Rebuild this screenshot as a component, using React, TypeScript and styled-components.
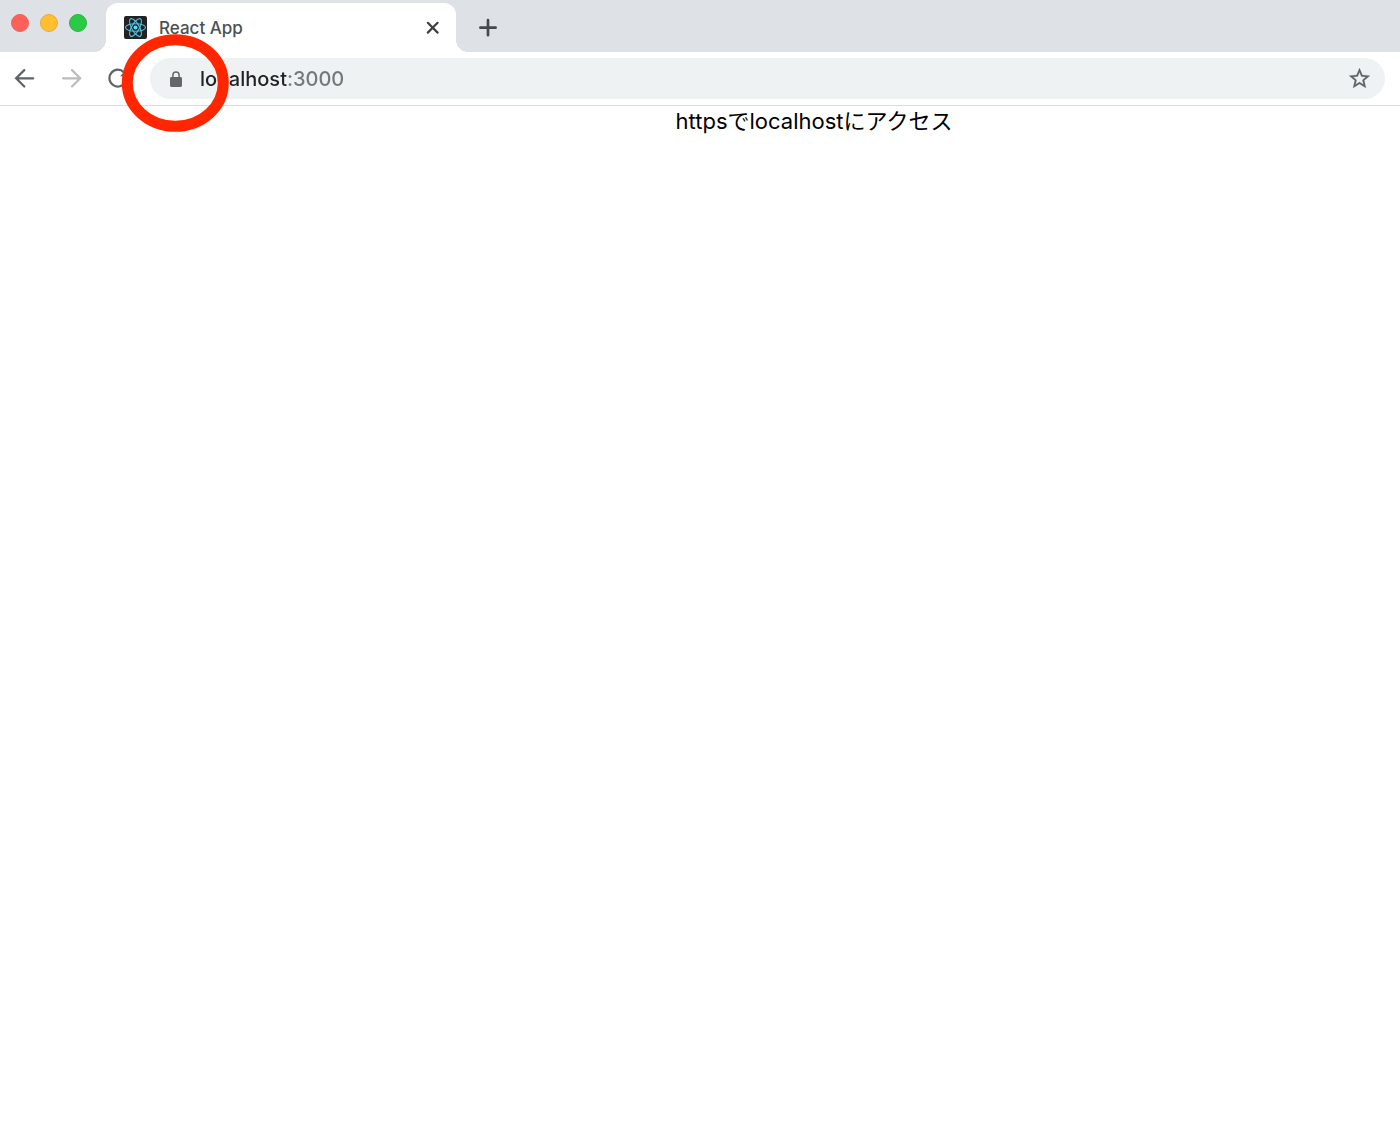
import React from "react";
import styled, { createGlobalStyle } from "styled-components";

const GlobalStyle = createGlobalStyle`
  *, *::before, *::after { box-sizing: border-box; }
  body {
    margin: 0;
    background: #ffffff;
    font-family: Inter, "Liberation Sans", "Noto Sans CJK JP", sans-serif;
  }
`;

const Browser = styled.div`
  min-height: 100vh;
  display: flex;
  flex-direction: column;
`;

const TabStrip = styled.header`
  height: 52px;
  display: flex;
  align-items: flex-end;
  background: #dee1e6;
`;

const WindowControls = styled.div`
  width: 106px;
  height: 52px;
  padding: 14px 0 0 11px;
  display: flex;
  gap: 11px;
`;

const WindowButton = styled.button<{ $fill: string; $edge: string }>`
  width: 18px;
  height: 18px;
  padding: 0;
  border: 1px solid ${(p) => p.$edge};
  border-radius: 50%;
  background: ${(p) => p.$fill};
`;

const Tab = styled.div`
  position: relative;
  width: 350px;
  height: 49px;
  padding: 0 16px 0 18px;
  display: flex;
  align-items: center;
  gap: 12px;
  border-radius: 12px 12px 0 0;
  background: #ffffff;

  &::before,
  &::after {
    content: "";
    position: absolute;
    bottom: 0;
    width: 12px;
    height: 12px;
  }
  &::before {
    right: 100%;
    background: radial-gradient(circle at 0 0, transparent 12px, #ffffff 12px);
  }
  &::after {
    left: 100%;
    background: radial-gradient(circle at 100% 0, transparent 12px, #ffffff 12px);
  }
`;

const TabTitle = styled.span`
  flex: 1;
  font-size: 17px;
  font-weight: 500;
  line-height: 24px;
  color: #4c5054;
`;

const IconButton = styled.button<{ $size: number; $color: string }>`
  width: ${(p) => p.$size}px;
  height: ${(p) => p.$size}px;
  padding: 0;
  display: flex;
  flex: none;
  align-items: center;
  justify-content: center;
  border: 0;
  background: none;
  color: ${(p) => p.$color};

  svg { display: block; flex: none; }
`;

const NewTab = styled.div`
  height: 49px;
  margin-left: 20px;
  display: flex;
  align-items: center;
`;

const Toolbar = styled.nav`
  height: 54px;
  padding: 0 15px 0 12px;
  display: flex;
  align-items: center;
  border-bottom: 1px solid #dadce0;
  background: #ffffff;
`;

const NavButtons = styled.div`
  width: 138px;
  display: flex;
  gap: 21px;
`;

const AddressBar = styled.div`
  position: relative;
  flex: 1;
  height: 41px;
  padding: 0 13px;
  display: flex;
  align-items: center;
  gap: 11px;
  border-radius: 21px;
  background: #eef2f3;
`;

const AddressInput = styled.input`
  flex: 1;
  min-width: 0;
  height: 28px;
  padding: 0;
  border: 0;
  outline: 0;
  font-family: inherit;
  font-size: 20px;
  font-weight: 500;
  line-height: 28px;
  color: #202124;
  background: linear-gradient(90deg, #202124 88px, #75787b 88px);
  background-clip: text;
  -webkit-background-clip: text;
  -webkit-text-fill-color: transparent;
`;

const Highlight = styled.svg`
  position: absolute;
  left: -29px;
  top: -25px;
  pointer-events: none;
`;

const Page = styled.main`
  flex: 1;
  padding-left: 228px;
  text-align: center;
`;

const Message = styled.p`
  margin: 0;
  font-size: 22px;
  line-height: 30px;
  color: #000000;
`;

const ReactIcon = () => (
  <svg width="23" height="23" viewBox="0 0 23 23" aria-hidden="true">
    <rect width="23" height="23" rx="2" fill="#222222" />
    <g fill="none" stroke="#53bfdd" strokeWidth="1.1">
      <ellipse cx="11.5" cy="11.5" rx="10" ry="3.8" />
      <ellipse cx="11.5" cy="11.5" rx="10" ry="3.8" transform="rotate(60 11.5 11.5)" />
      <ellipse cx="11.5" cy="11.5" rx="10" ry="3.8" transform="rotate(120 11.5 11.5)" />
    </g>
    <circle cx="11.5" cy="11.5" r="2" fill="#61dafb" />
  </svg>
);

const CloseIcon = () => (
  <svg width="14" height="14" viewBox="0 0 14 14" stroke="currentColor" strokeWidth="2.2" strokeLinecap="round">
    <path d="M1.8 1.8l9.8 9.8M11.6 1.8l-9.8 9.8" />
  </svg>
);

const PlusIcon = () => (
  <svg width="20" height="20" viewBox="0 0 20 20" stroke="currentColor" strokeWidth="2.7" strokeLinecap="round">
    <path d="M10 2.2v15M2.4 9.7h15.2" />
  </svg>
);

const ArrowIcon = ({ forward = false }: { forward?: boolean }) => (
  <svg width="22" height="22" viewBox="0 0 22 22" fill="none" stroke="currentColor" strokeWidth="2.2" strokeLinecap="round">
    <path d={forward ? "M2 10.3h16.8M11 2.1l8.2 8.2-8.2 8.2" : "M19.2 10.3H2.4M10.3 2.1L2.1 10.3l8.2 8.2"} />
  </svg>
);

const ReloadIcon = () => (
  <svg width="22" height="22" viewBox="0 0 22 22" fill="none" stroke="currentColor" strokeWidth="2.2">
    <path d="M17.4 13.8A8.4 8.4 0 1 1 16 4.4l2 2.4" />
    <path d="M19 1.3v7h-7z" fill="currentColor" stroke="none" />
  </svg>
);

const LockIcon = () => (
  <svg width="14" height="18" viewBox="0 0 14 18">
    <rect x="1" y="7" width="12" height="10" rx="1.4" fill="currentColor" />
    <path d="M3.9 8V5a3.1 3.1 0 0 1 6.2 0v3" fill="none" stroke="currentColor" strokeWidth="1.5" />
  </svg>
);

const StarIcon = () => (
  <svg width="25" height="25" viewBox="0 0 24 24" fill="currentColor" stroke="currentColor" strokeWidth="0.2">
    <path d="M22 9.24l-7.19-.62L12 2 9.19 8.63 2 9.24l5.46 4.73L5.82 21 12 17.27 18.18 21l-1.63-7.03L22 9.24zM12 15.4l-3.76 2.27 1-4.28-3.32-2.88 4.38-.38L12 6.1l1.71 4.04 4.38.38-3.32 2.88 1 4.28L12 15.4z" />
  </svg>
);

export default function App() {
  return (
    <>
      <GlobalStyle />
      <Browser>
        <TabStrip>
          <WindowControls>
            <WindowButton aria-label="Close window" $fill="#ff6159" $edge="#e9645c" />
            <WindowButton aria-label="Minimize window" $fill="#ffbf2f" $edge="#e5ad38" />
            <WindowButton aria-label="Zoom window" $fill="#2aca44" $edge="#2ab540" />
          </WindowControls>
          <Tab>
            <ReactIcon />
            <TabTitle>React App</TabTitle>
            <IconButton aria-label="Close tab" $size={14} $color="#3c4043"><CloseIcon /></IconButton>
          </Tab>
          <NewTab>
            <IconButton aria-label="New tab" $size={24} $color="#45484c"><PlusIcon /></IconButton>
          </NewTab>
        </TabStrip>
        <Toolbar>
          <NavButtons>
            <IconButton aria-label="Back" $size={26} $color="#5f6368"><ArrowIcon /></IconButton>
            <IconButton aria-label="Forward" $size={26} $color="#babcbe"><ArrowIcon forward /></IconButton>
            <IconButton aria-label="Reload" $size={26} $color="#5f6368"><ReloadIcon /></IconButton>
          </NavButtons>
          <AddressBar>
            <IconButton aria-label="Site information" $size={26} $color="#646669"><LockIcon /></IconButton>
            <AddressInput aria-label="Address" type="text" defaultValue="localhost:3000" spellCheck={false} />
            <IconButton aria-label="Bookmark this page" $size={26} $color="#5f6368"><StarIcon /></IconButton>
            <Highlight width="110" height="100" viewBox="0 0 110 100" aria-hidden="true">
              <ellipse cx="54.3" cy="50" rx="48" ry="43.3" fill="none" stroke="#ff2600" strokeWidth="11" />
            </Highlight>
          </AddressBar>
        </Toolbar>
        <Page>
          <Message>httpsでlocalhostにアクセス</Message>
        </Page>
      </Browser>
    </>
  );
}
